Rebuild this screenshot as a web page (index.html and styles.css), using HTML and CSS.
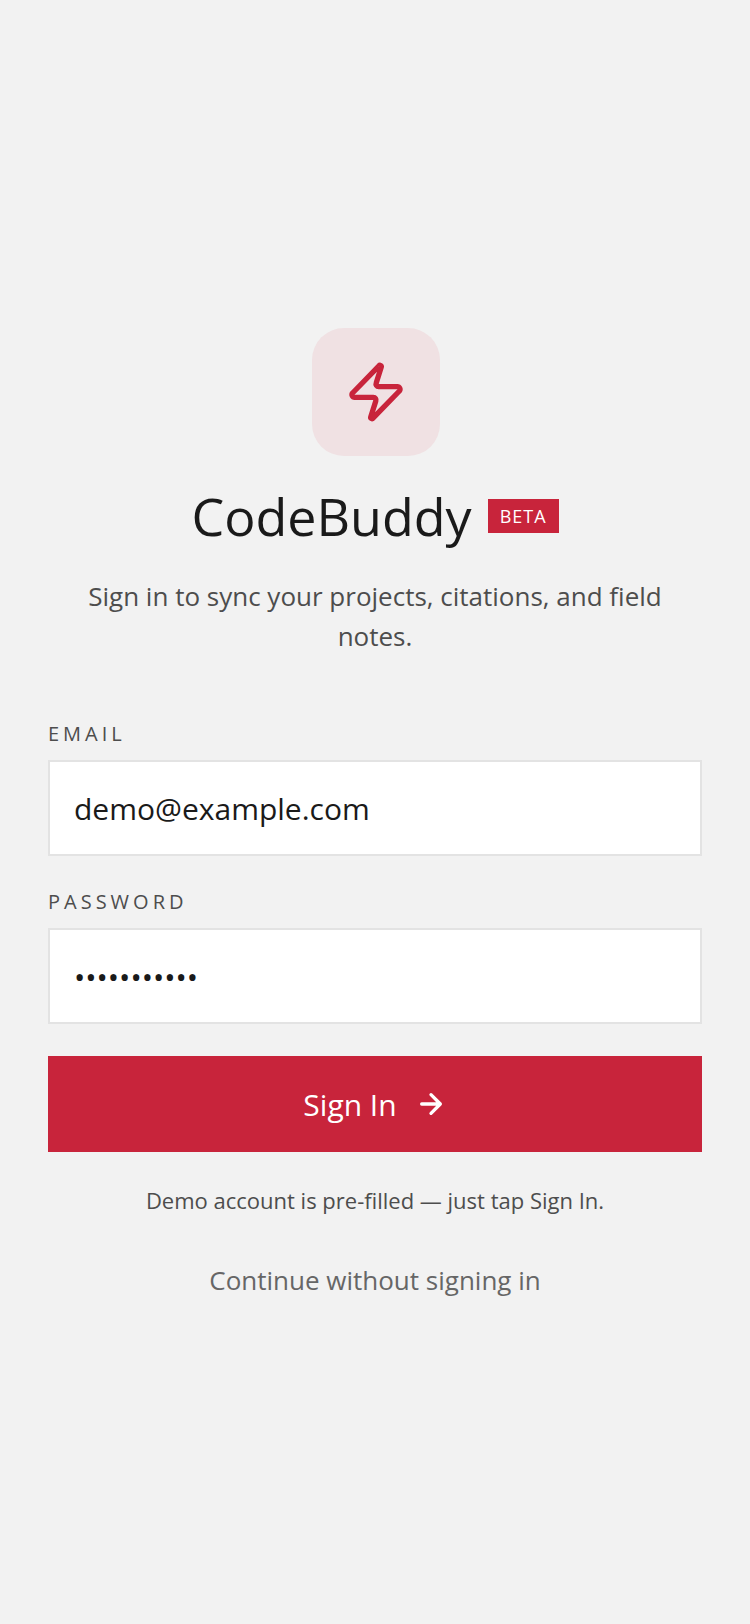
FILE: index.html
```html
<!DOCTYPE html>
<html lang="en">

<head>
  <meta charset="UTF-8">
  <meta name="viewport" content="width=device-width, initial-scale=1.0">
  <title>CodeBuddy</title>
  <link rel="stylesheet" href="styles.css">
</head>

<body>
  <main class="login">
    <div class="logo">
      <svg width="64" height="64" viewBox="0 0 24 24" fill="none" stroke="#c8243b" stroke-width="2" stroke-linecap="round" stroke-linejoin="round">
        <path d="M4 14a1 1 0 0 1-.78-1.63l9.9-10.2a.5.5 0 0 1 .86.46l-1.92 6.02A1 1 0 0 0 13 10h7a1 1 0 0 1 .78 1.63l-9.9 10.2a.5.5 0 0 1-.86-.46l1.92-6.02A1 1 0 0 0 11 14z"/>
      </svg>
    </div>
    <div class="brand">
      <h1>CodeBuddy</h1>
      <span class="badge">BETA</span>
    </div>
    <p class="tagline">Sign in to sync your projects, citations, and field notes.</p>

    <form class="form">
      <label for="email">EMAIL</label>
      <input id="email" type="email" value="demo@example.com">
      <label for="password">PASSWORD</label>
      <input id="password" type="password" value="password123">
      <button type="button" class="submit">
        Sign In
        <svg width="32" height="32" viewBox="0 0 24 24" fill="none" stroke="#fff" stroke-width="2.5" stroke-linecap="round" stroke-linejoin="round">
          <path d="M5 12h14M12 5l7 7-7 7"/>
        </svg>
      </button>
    </form>

    <p class="hint">Demo account is pre-filled — just tap Sign In.</p>
    <a class="skip" href="#">Continue without signing in</a>
  </main>
</body>

</html>
```

FILE: styles.css
```css
* {
  box-sizing: border-box;
}

html,
body {
  width: 100%;
  height: 100%;
  margin: 0;
}

body {
  background-color: #f2f2f2;
  color: #1a1a1a;
  font-family: "Open Sans", sans-serif;
}

.login {
  display: flex;
  flex-direction: column;
  align-items: center;
  justify-content: center;
  height: 100%;
  padding: 0 48px;
}

.logo {
  display: flex;
  align-items: center;
  justify-content: center;
  width: 128px;
  height: 128px;
  margin-bottom: 24px;
  margin-left: 2px;
  background-color: #f0e1e3;
  border-radius: 32px;
}

.brand {
  display: flex;
  align-items: center;
  gap: 16px;
  margin-bottom: 24px;
}

h1 {
  margin: 0;
  font-size: 52px;
  font-weight: 400;
  line-height: 72px;
}

.badge {
  padding: 0 12px;
  background-color: #c8243b;
  color: #fff;
  font-size: 18px;
  letter-spacing: 1px;
  line-height: 34px;
}

.tagline {
  margin: 0 0 64px;
  color: #4d4d4d;
  font-size: 26px;
  line-height: 40px;
  text-align: center;
}

.form {
  display: flex;
  flex-direction: column;
  width: 100%;
}

label {
  margin-bottom: 12px;
  color: #4d4d4d;
  font-size: 20px;
  letter-spacing: 4px;
  line-height: 28px;
}

input {
  width: 100%;
  height: 96px;
  margin-bottom: 32px;
  padding: 0 24px;
  background-color: #fff;
  border: 2px solid #e3e3e3;
  border-radius: 0;
  color: #1a1a1a;
  font-family: inherit;
  font-size: 30px;
}

.submit {
  display: flex;
  align-items: center;
  justify-content: center;
  gap: 18px;
  height: 96px;
  background-color: #c8243b;
  border: none;
  color: #fff;
  font-family: inherit;
  font-size: 30px;
  cursor: pointer;
}

.hint {
  margin: 32px 0 0;
  color: #4d4d4d;
  font-size: 22px;
  line-height: 32px;
  text-align: center;
}

.skip {
  margin-top: 48px;
  color: #666;
  font-size: 26px;
  line-height: 32px;
  text-decoration: none;
}
```
